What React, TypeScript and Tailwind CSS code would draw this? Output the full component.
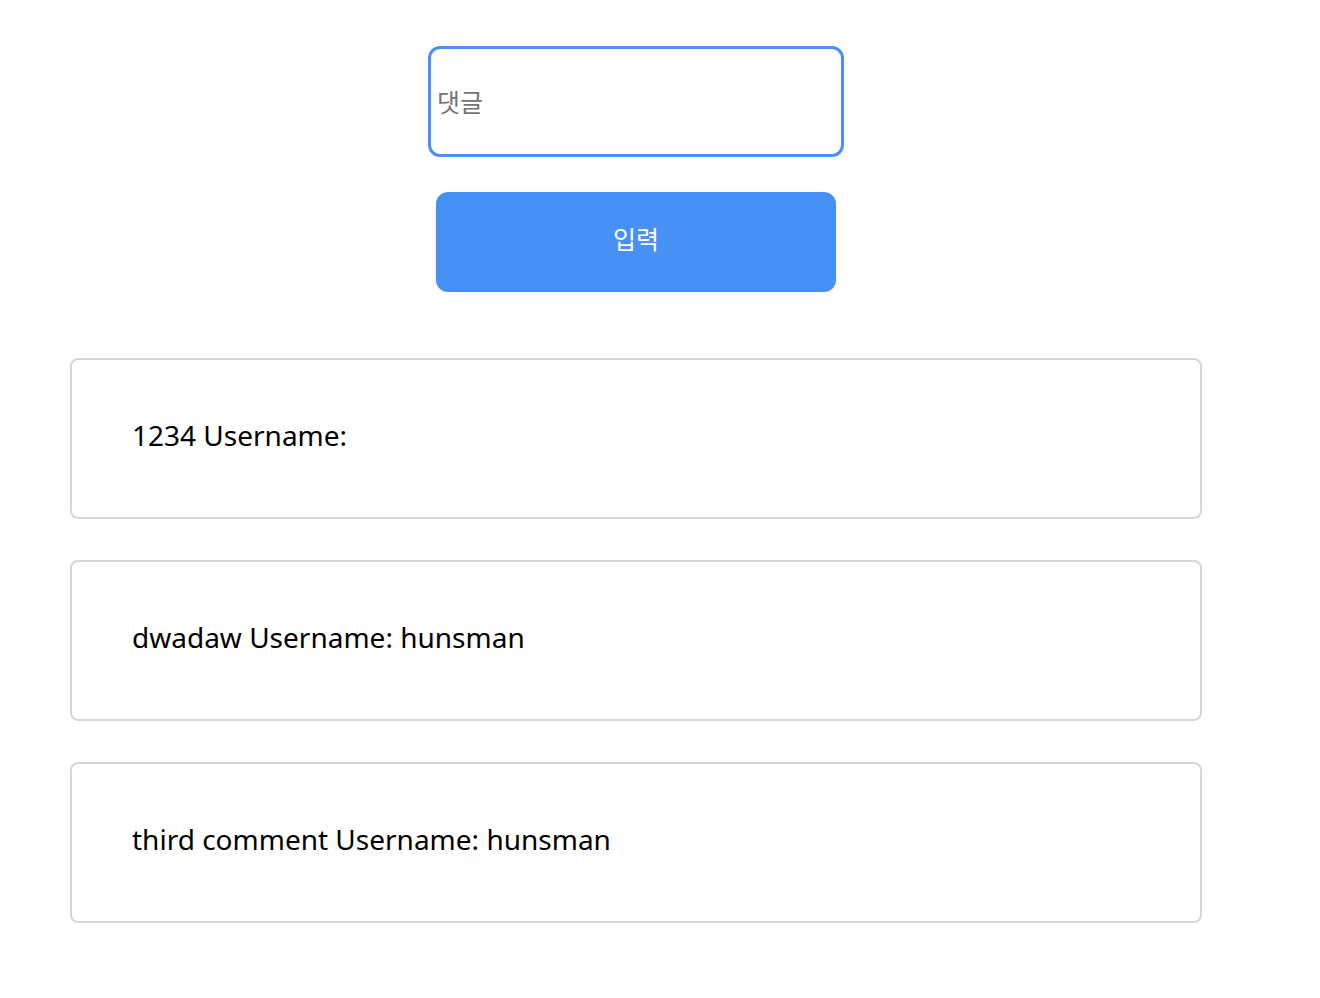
import React from 'react';

const comments = [
  { text: '1234', user: '' },
  { text: 'dwadaw', user: 'hunsman' },
  { text: 'third comment', user: 'hunsman' },
];

export default function App() {
  return (
    <div className="w-[1272px] pt-[46px] font-['Noto_Sans','Noto_Sans_CJK_KR',sans-serif] bg-white">
      <div className="flex flex-col items-center">
        <input
          placeholder="댓글"
          className="w-[416px] h-[111px] border-[3px] border-[#4a8ff5] rounded-[12px] pl-[6px] text-[25px] text-black placeholder:text-[#757575] outline-none"
        />
        <button className="mt-[35px] w-[400px] h-[100px] bg-[#4790f6] rounded-[12px] text-white text-[25px] pb-[4px]">
          입력
        </button>
      </div>
      <div className="mt-[66px] ml-[70px] flex flex-col gap-[41px]">
        {comments.map((c, i) => (
          <div
            key={i}
            className="w-[1132px] h-[161px] border-2 border-[#d6d6d6] rounded-[8px] flex items-center pl-[60px] pb-[8px] text-[28px] text-black"
          >
            {c.text} Username: {c.user}
          </div>
        ))}
      </div>
    </div>
  );
}
